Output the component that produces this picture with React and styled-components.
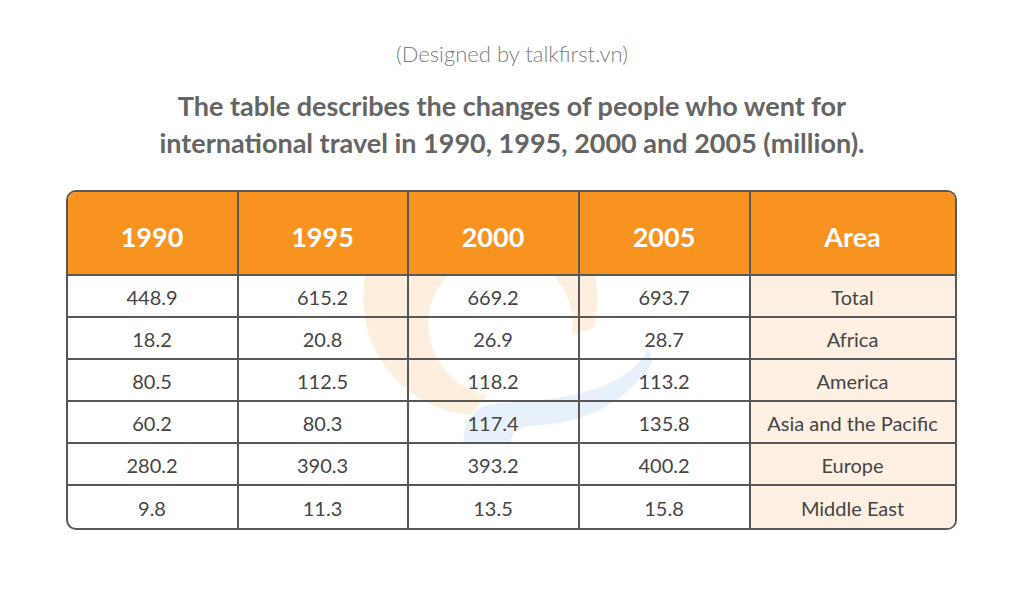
import React from "react";
import styled, { createGlobalStyle } from "styled-components";

const GlobalStyle = createGlobalStyle`
  body {
    margin: 0;
    background: #ffffff;
    font-family: Lato, "Open Sans", sans-serif;
  }
`;

const years = ["1990", "1995", "2000", "2005"];

const rows = [
  { values: ["448.9", "615.2", "669.2", "693.7"], area: "Total" },
  { values: ["18.2", "20.8", "26.9", "28.7"], area: "Africa" },
  { values: ["80.5", "112.5", "118.2", "113.2"], area: "America" },
  { values: ["60.2", "80.3", "117.4", "135.8"], area: "Asia and the Pacific" },
  { values: ["280.2", "390.3", "393.2", "400.2"], area: "Europe" },
  { values: ["9.8", "11.3", "13.5", "15.8"], area: "Middle East" },
];

// faint logo behind the table, drawn in page coordinates
const Watermark = () => (
  <WatermarkSvg viewBox="66 192 890 340" preserveAspectRatio="none">
    <path
      d="M593 330 A117 117 0 1 0 470 417 L487 397 A72 72 0 1 1 571 338 Z"
      fill="#fdeedd"
    />
    <path
      d="M648 352 C620 395 560 402 500 405 C475 407 463 418 463 445 L510 445 C512 432 520 428 540 427 C590 424 630 400 652 364 Z"
      fill="#e7f1fb"
    />
  </WatermarkSvg>
);

const App = () => {
  return (
    <Page>
      <GlobalStyle />
      <Credit>(Designed by talkfirst.vn)</Credit>
      <Title>
        The table describes the changes of people who went for
        <br />
        international travel in 1990, 1995, 2000 and 2005 (million).
      </Title>
      <Grid>
        <Watermark />
        {years.map((y) => (
          <HeadCell key={y}>{y}</HeadCell>
        ))}
        <HeadCell $last>Area</HeadCell>
        {rows.map((r, i) => (
          <React.Fragment key={r.area}>
            {r.values.map((v, j) => (
              <Cell key={j} $bottom={i === rows.length - 1}>
                {v}
              </Cell>
            ))}
            <Cell $area $last $bottom={i === rows.length - 1}>
              {r.area}
            </Cell>
          </React.Fragment>
        ))}
      </Grid>
    </Page>
  );
};

export default App;

const Page = styled.div`
  width: 1024px;
  height: 590px;
  display: flex;
  flex-direction: column;
  align-items: center;
  padding-top: 39px;
  box-sizing: border-box;
`;

const Credit = styled.div`
  font-size: 22px;
  font-weight: 300;
  color: #7d7d7d;
  line-height: 30px;
`;

const Title = styled.h1`
  margin: 18px 0 0;
  font-size: 27px;
  font-weight: 700;
  color: #656565;
  line-height: 37px;
  text-align: center;
`;

const Grid = styled.div`
  position: relative;
  margin-top: 29px;
  margin-left: -2px;
  width: 891px;
  box-sizing: border-box;
  display: grid;
  grid-template-columns: 171px 170px 171px 171px 1fr;
  grid-template-rows: 84px repeat(6, 42px);
  border: 2px solid #585858;
  border-radius: 10px;
  overflow: hidden;
`;

const WatermarkSvg = styled.svg`
  position: absolute;
  left: -2px;
  top: -2px;
  width: 891px;
  height: 340px;
  z-index: 0;
  pointer-events: none;
`;

const HeadCell = styled.div`
  position: relative;
  z-index: 1;
  display: flex;
  align-items: center;
  justify-content: center;
  padding-top: 6px;
  background: #f7931e;
  color: #ffffff;
  font-size: 27px;
  font-weight: 700;
  border-right: ${(p) => (p.$last ? "none" : "2px solid #585858")};
  border-bottom: 2px solid #585858;
`;

const Cell = styled.div`
  position: relative;
  z-index: 1;
  display: flex;
  align-items: center;
  justify-content: center;
  padding-top: 1px;
  font-size: 20px;
  color: #454545;
  background: ${(p) => (p.$area ? "#fdf0e2" : "transparent")};
  border-right: ${(p) => (p.$last ? "none" : "2px solid #585858")};
  border-bottom: ${(p) => (p.$bottom ? "none" : "2px solid #585858")};
`;
